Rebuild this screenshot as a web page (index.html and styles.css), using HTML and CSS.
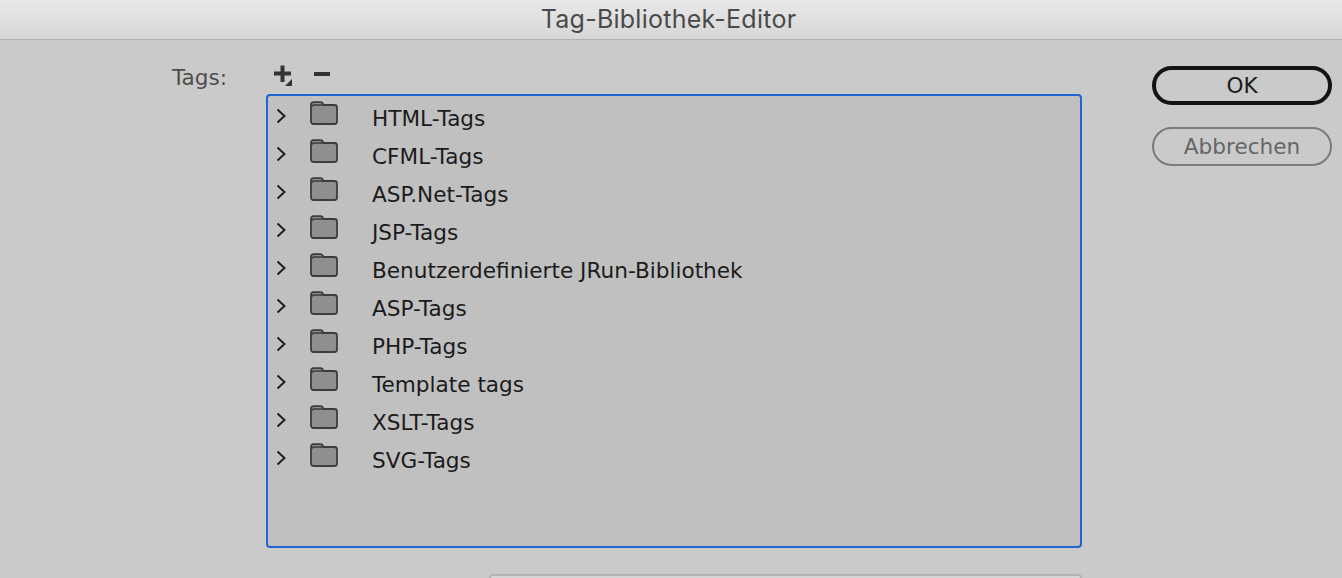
FILE: index.html
```html
<!DOCTYPE html>
<html lang="de">
<head>
    <meta charset="UTF-8">
    <title>Tag-Bibliothek-Editor</title>
    <link rel="stylesheet" href="styles.css">
</head>
<body>
    <svg class="icon-defs" width="0" height="0">
        <symbol id="folder" viewBox="0 0 28 24">
            <path d="M1 20.5V4C1 2.3 2 1.2 3.5 1.2H10.5C12 1.2 12.8 2 13.5 4H24.5C26 4 27 5 27 6.5V20.5C27 22 26 23 24.5 23H3.5C2 23 1 22 1 20.5Z" fill="#8f8f8f" stroke="#3c3c3c" stroke-width="1.8"/>
            <path d="M1.5 6C2 4.7 2.8 4 4 4H14" fill="none" stroke="#3c3c3c" stroke-width="1.3"/>
        </symbol>
        <symbol id="chevron" viewBox="0 0 10 16">
            <path d="M1.5 1.5L8.5 8L1.5 14.5" fill="none" stroke="#1c1c1c" stroke-width="1.9"/>
        </symbol>
    </svg>

    <div class="titlebar">Tag-Bibliothek-Editor</div>

    <div class="dialog">
        <div class="tags-label">Tags:</div>

        <div class="center">
            <div class="toolbar">
                <svg class="add-icon" width="22" height="22" viewBox="0 0 22 22">
                    <path d="M1 8.5H18M9.5 0.5V17" stroke="#333" stroke-width="4" fill="none"/>
                    <path d="M19 14V21H12Z" fill="#333"/>
                </svg>
                <svg class="remove-icon" width="16" height="4" viewBox="0 0 16 4">
                    <path d="M0 2H16" stroke="#333" stroke-width="4" fill="none"/>
                </svg>
            </div>

            <div class="tree">
                <div class="row"><svg class="chevron"><use href="#chevron"/></svg><svg class="folder"><use href="#folder"/></svg><span>HTML-Tags</span></div>
                <div class="row"><svg class="chevron"><use href="#chevron"/></svg><svg class="folder"><use href="#folder"/></svg><span>CFML-Tags</span></div>
                <div class="row"><svg class="chevron"><use href="#chevron"/></svg><svg class="folder"><use href="#folder"/></svg><span>ASP.Net-Tags</span></div>
                <div class="row"><svg class="chevron"><use href="#chevron"/></svg><svg class="folder"><use href="#folder"/></svg><span>JSP-Tags</span></div>
                <div class="row"><svg class="chevron"><use href="#chevron"/></svg><svg class="folder"><use href="#folder"/></svg><span>Benutzerdefinierte JRun-Bibliothek</span></div>
                <div class="row"><svg class="chevron"><use href="#chevron"/></svg><svg class="folder"><use href="#folder"/></svg><span>ASP-Tags</span></div>
                <div class="row"><svg class="chevron"><use href="#chevron"/></svg><svg class="folder"><use href="#folder"/></svg><span>PHP-Tags</span></div>
                <div class="row"><svg class="chevron"><use href="#chevron"/></svg><svg class="folder"><use href="#folder"/></svg><span>Template tags</span></div>
                <div class="row"><svg class="chevron"><use href="#chevron"/></svg><svg class="folder"><use href="#folder"/></svg><span>XSLT-Tags</span></div>
                <div class="row"><svg class="chevron"><use href="#chevron"/></svg><svg class="folder"><use href="#folder"/></svg><span>SVG-Tags</span></div>
            </div>

            <div class="field"></div>
        </div>

        <div class="buttons">
            <button class="btn btn-primary">OK</button>
            <button class="btn btn-disabled">Abbrechen</button>
        </div>
    </div>
</body>
</html>
```

FILE: styles.css
```css
html, body {
    height: 100%;
}

body {
    margin: 0;
    overflow: hidden;
    background-color: #cacaca;
    color: #1b1b1b;
    font-family: "DejaVu Sans", Arial, sans-serif;
    font-size: 21.6px;
}

.icon-defs {
    display: block;
}

.titlebar {
    height: 39px;
    padding-right: 5px;
    line-height: 38px;
    border-bottom: 1px solid #b0b0b0;
    background: linear-gradient(#e9e9e9, #d6d6d6);
    color: #4a4a4a;
    font-family: Inter, sans-serif;
    font-size: 25px;
    letter-spacing: 0.25px;
    text-align: center;
}

.dialog {
    display: flex;
    padding-left: 172px;
}

.tags-label {
    width: 94px;
    padding-top: 23px;
    color: #4e4e4e;
    line-height: 30px;
}

.center {
    width: 816px;
}

.toolbar {
    display: flex;
    align-items: flex-start;
    gap: 19px;
    height: 54px;
    padding-top: 25px;
    padding-left: 7px;
    box-sizing: border-box;
}

.remove-icon {
    margin-top: 7px;
}

.tree {
    height: 454px;
    padding-top: 5px;
    box-sizing: border-box;
    border: 2px solid #1f66cc;
    border-radius: 4px;
    background-color: #c0c0c0;
}

.row {
    display: flex;
    align-items: center;
    height: 38px;
    padding-bottom: 6px;
    box-sizing: border-box;
}

.chevron {
    width: 10px;
    height: 16px;
    margin-left: 8px;
    margin-top: -3px;
}

.folder {
    width: 28px;
    height: 24px;
    margin-left: 24px;
    margin-top: -8px;
}

.row span {
    margin-left: 34px;
    margin-top: 2px;
}

.field {
    height: 20px;
    margin-top: 26px;
    margin-left: 223px;
    border: 2px solid #b4b4b4;
    border-radius: 4px;
    background-color: #d6d6d6;
}

.buttons {
    display: flex;
    flex-direction: column;
    gap: 22px;
    width: 180px;
    margin-left: 70px;
    padding-top: 26px;
}

.btn {
    height: 39px;
    padding: 1px 0 0;
    border-radius: 20px;
    background: transparent;
    font-family: "DejaVu Sans", Arial, sans-serif;
    font-size: 21.6px;
    line-height: 30px;
}

.btn-primary {
    border: 4px solid #141414;
    color: #1b1b1b;
}

.btn-disabled {
    border: 2px solid #7b7b7b;
    color: #666;
}
```
